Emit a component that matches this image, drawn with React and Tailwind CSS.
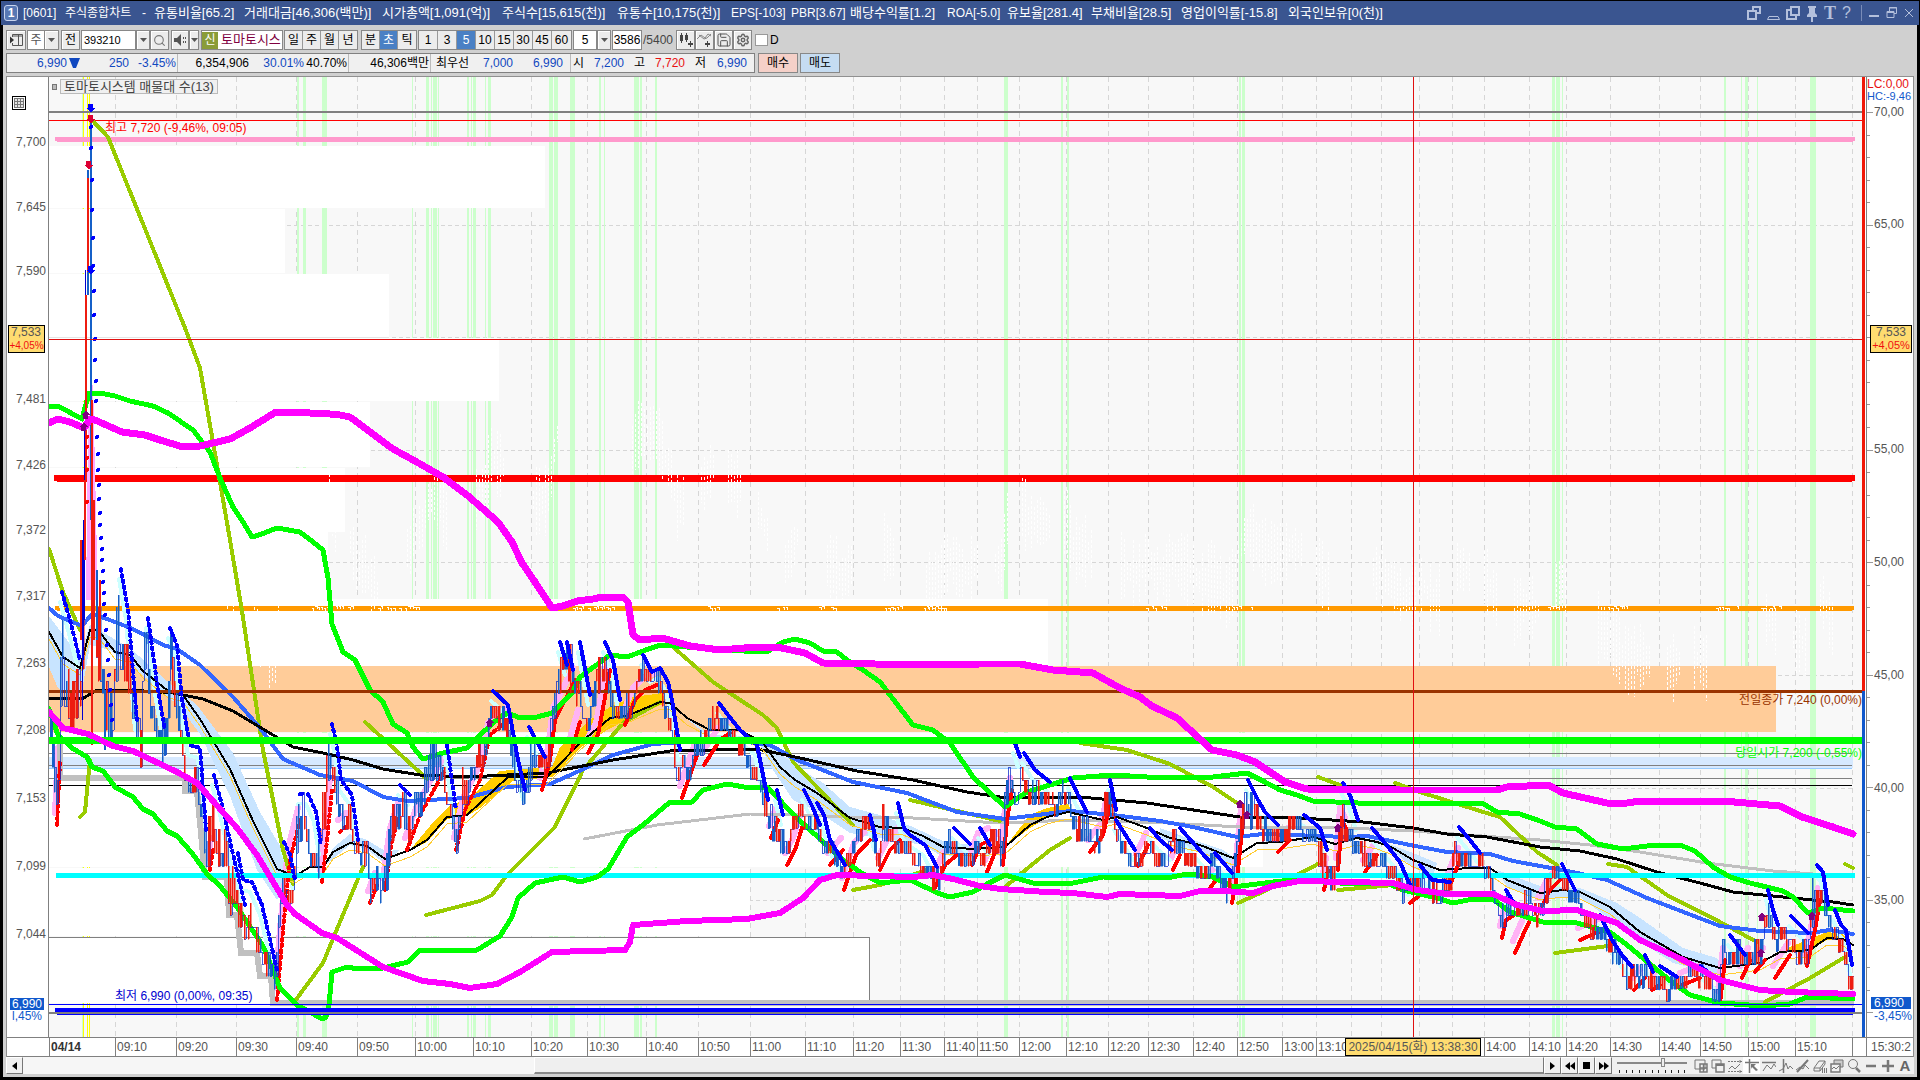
import React from "react";
import { Search, Settings, Save } from "lucide-react";

const X0 = 49;
const Y0 = 77;
const PLOT_W = 1817;
const PLOT_H = 960;
const topPct = (y) => ((y - Y0) / PLOT_H) * 100 + "%";
const leftPct = (x) => ((x - X0) / PLOT_W) * 100 + "%";

const titleItems = [
  ["[0601]", "w-[42px]"],
  ["주식종합차트", "w-[77px]"],
  ["-", "w-[12px]"],
  ["유통비율[65.2]", "w-[90px] text-[13px]"],
  ["거래대금[46,306(백만)]", "w-[138px] text-[13px]"],
  ["시가총액[1,091(억)]", "w-[120px] text-[13px]"],
  ["주식수[15,615(천)]", "w-[115px] text-[13px]"],
  ["유통수[10,175(천)]", "w-[114px] text-[13px]"],
  ["EPS[-103]", "w-[60px]"],
  ["PBR[3.67]", "w-[59px]"],
  ["배당수익률[1.2]", "w-[97px] text-[13px]"],
  ["ROA[-5.0]", "w-[60px]"],
  ["유보율[281.4]", "w-[84px] text-[13px]"],
  ["부채비율[28.5]", "w-[90px] text-[13px]"],
  ["영업이익률[-15.8]", "w-[107px] text-[13px]"],
  ["외국인보유[0(천)]", "w-[110px] text-[13px]"],
];

const priceLabels = [
  ["7,700", 142], ["7,645", 207], ["7,590", 271], ["7,481", 399], ["7,426", 465],
  ["7,372", 530], ["7,317", 596], ["7,263", 663], ["7,208", 730], ["7,153", 798],
  ["7,099", 866], ["7,044", 934],
];
const scaleLabels = [
  ["70,00", 112], ["65,00", 224], ["55,00", 449], ["50,00", 562], ["45,00", 675],
  ["40,00", 788], ["35,00", 900],
];

const timeTicks = [
  [49, "04/14"], [115, "09:10"], [176, "09:20"], [236, "09:30"], [296, "09:40"], [357, "09:50"],
  [415, "10:00"], [473, "10:10"], [531, "10:20"], [587, "10:30"], [646, "10:40"], [698, "10:50"],
  [750, "11:00"], [805, "11:10"], [853, "11:20"], [900, "11:30"], [944, "11:40"], [977, "11:50"],
  [1019, "12:00"], [1066, "12:10"], [1108, "12:20"], [1148, "12:30"], [1193, "12:40"], [1237, "12:50"],
  [1282, "13:00"], [1316, "13:10"], [1351, ""], [1381, ""], [1419, ""], [1452, ""], [1484, "14:00"],
  [1529, "14:10"], [1566, "14:20"], [1610, "14:30"], [1659, "14:40"], [1700, "14:50"], [1748, "15:00"],
  [1795, "15:10"], [1852, ""],
];
const timeColumns = timeTicks
  .map(([x], i) => `minmax(0,${(i + 1 < timeTicks.length ? timeTicks[i + 1][0] : 1866) - x}fr)`)
  .join(" ");

const greenBands = [
  [297, 2], [303, 3], [322, 5], [412, 1], [426, 3], [431, 1], [433, 4], [438, 1], [467, 2], [471, 1],
  [473, 3], [485, 1], [488, 3], [549, 4], [554, 4], [570, 5], [599, 2], [604, 1], [634, 5], [640, 2],
  [655, 2], [1004, 4], [1061, 2], [1067, 2], [1239, 2], [1242, 3], [1552, 3], [1556, 4], [1562, 1],
  [1724, 2], [1741, 1], [1745, 3], [1757, 1], [1810, 6],
];

const volumeBars = [
  [146, 62, 545], [209, 64, 285], [274, 63, 389], [338, 63, 499], [402, 65, 370], [468, 64, 345],
  [532, 67, 328], [599, 67, 1048], [666, 66, 1776], [733, 67, 1300], [800, 67, 1263], [868, 68, 750],
  [937, 66, 870],
];

const magentaUpper = "49,423 58,419 70,422 84,428 90,419 95,420 122,432 145,435 160,440 183,447 200,446 230,439 250,428 276,412 290,412 330,414 340,415 350,417 393,449 415,461 443,477 467,495 498,522 512,542 522,563 535,582 552,608 563,606 577,601 593,599 602,597 623,597 628,602 633,635 640,640 662,638 690,646 720,650 757,647 777,647 805,653 823,663 927,665 980,664 1020,664 1053,670 1093,673 1120,688 1140,697 1152,706 1177,718 1212,750 1237,755 1255,762 1285,782 1307,789 1400,790 1497,790 1507,787 1548,785 1563,793 1607,803 1627,803 1640,801 1723,801 1780,806 1802,817 1833,827 1853,834";
const greenUpper = "49,407 58,406 82,419 89,393 100,393 115,396 130,401 153,406 168,413 193,430 210,452 220,478 233,507 243,522 252,537 262,534 277,528 300,532 313,542 323,550 328,578 332,624 343,652 355,660 370,690 383,702 393,724 407,733 413,747 423,759 443,753 467,748 480,735 500,717 508,713 520,718 537,717 552,713 572,693 580,677 610,655 627,657 643,651 660,645 687,647 720,650 767,652 783,642 795,639 810,643 823,651 837,652 847,660 863,670 880,682 913,725 933,730 950,743 973,777 1005,807 1027,792 1050,785 1073,778 1113,775 1147,777 1213,777 1247,773 1263,781 1280,790 1297,795 1313,801 1380,804 1413,803 1482,803 1497,812 1520,814 1540,821 1555,827 1577,829 1597,844 1623,849 1647,846 1680,845 1695,851 1713,867 1730,877 1750,883 1783,891 1793,897 1808,913 1823,908 1853,911";
const greenLower = "49,709 58,735 72,748 87,757 92,767 103,771 115,787 133,797 143,809 153,814 167,831 177,836 192,853 207,874 220,886 237,907 263,946 280,988 297,1005 310,1012 322,1019 326,1017 329,1005 332,972 347,967 358,969 383,968 408,962 420,950 443,951 477,950 500,936 512,917 518,898 535,883 563,877 580,882 597,877 608,869 627,837 643,825 670,802 692,802 703,790 727,784 750,788 767,787 797,818 843,860 860,872 880,883 910,880 940,894 950,897 973,892 987,884 1005,875 1033,883 1073,883 1103,877 1167,878 1187,874 1213,877 1233,887 1290,880 1340,883 1387,883 1403,890 1437,898 1453,903 1473,899 1493,899 1510,912 1543,922 1577,923 1610,932 1627,945 1673,983 1690,995 1720,1003 1763,1006 1790,1004 1807,997 1853,999";
const magentaLower = "49,712 63,728 88,734 113,746 133,751 177,772 197,783 237,828 257,855 287,905 295,914 322,933 337,938 383,967 423,981 450,984 470,988 497,984 520,972 552,952 625,950 630,942 633,925 687,921 747,919 780,913 803,898 820,880 837,875 913,877 933,875 953,879 980,886 1000,889 1047,892 1073,893 1107,897 1120,894 1180,896 1200,891 1223,891 1253,893 1273,886 1300,881 1347,882 1393,883 1417,890 1447,894 1493,894 1517,905 1543,911 1577,910 1617,923 1640,940 1683,960 1720,980 1760,990 1793,992 1853,994";
const blueAverage = "49,608 58,616 82,626 92,614 107,619 133,629 163,645 177,649 200,665 233,697 260,728 283,759 320,775 353,781 383,797 407,801 467,798 507,787 550,784 577,772 613,755 653,744 687,742 747,742 770,745 797,760 853,782 907,793 957,812 1005,819 1070,811 1113,815 1160,821 1193,827 1237,837 1263,834 1347,837 1367,836 1410,845 1447,852 1490,854 1513,861 1573,872 1607,880 1647,898 1720,926 1760,931 1810,933 1830,930 1853,934";
const blackLong = "49,698 82,699 97,690 130,690 173,693 203,699 233,711 263,729 293,747 323,753 353,760 383,769 420,775 467,777 547,773 613,760 670,751 757,749 800,758 857,771 913,780 967,792 1000,797 1080,797 1147,803 1240,817 1300,818 1363,822 1413,828 1447,834 1487,837 1540,847 1580,851 1617,859 1657,872 1700,883 1733,892 1793,898 1833,902 1853,905";
const blackShort = "49,632 63,657 80,668 90,630 98,630 115,652 130,655 143,671 167,690 183,695 200,719 230,769 253,821 277,869 295,876 310,867 323,867 333,852 350,843 367,846 385,859 410,850 427,840 447,817 467,815 508,777 547,777 557,767 580,743 610,718 627,716 660,702 670,703 687,718 710,730 740,730 763,743 780,767 795,780 817,793 850,818 880,827 903,828 923,836 943,847 973,849 1005,847 1030,825 1047,817 1068,812 1103,820 1117,817 1147,828 1170,838 1200,845 1233,858 1257,843 1280,842 1313,837 1335,844 1357,838 1377,842 1393,848 1413,860 1440,870 1470,868 1490,868 1507,880 1540,893 1563,890 1580,892 1610,907 1640,932 1683,957 1720,968 1760,963 1780,952 1810,950 1827,938 1843,939 1853,945";
const grayAverage = "584,839 657,825 750,814 800,815 847,817 913,818 1000,823 1073,820 1167,823 1240,827 1347,828 1413,831 1467,835 1540,840 1590,845 1640,852 1707,863 1773,871 1853,877";

const oliveLines = [
  "92,120 108,137 185,328 200,368 217,465 230,540 242,611 263,750 283,850 293,884",
  "49,549 63,592 80,630", "80,817 85,812 90,760", "295,1001 323,963 337,929 363,867",
  "365,722 427,779", "426,915 480,901 492,895 507,875 555,827 583,770 623,723 660,702",
  "673,647 713,682 763,715 777,728 793,762 853,825", "853,890 880,885 927,870", "910,800 1000,821",
  "1005,887 1023,872 1050,850 1070,838", "1080,743 1127,750 1170,764 1213,787 1240,805",
  "1238,903 1267,890 1318,864", "1318,777 1340,785", "1338,890 1393,885",
  "1395,783 1423,793 1480,811 1500,817 1517,833 1537,852 1557,865", "1555,953 1608,946",
  "1608,864 1627,867 1667,895 1720,922 1757,942", "1765,1002 1810,978 1845,957", "1845,864 1853,868",
];

const blueClouds = [
  "49,616 67,640 80,655 90,625 130,648 167,681 197,705 233,753 260,812 280,846 293,857 292,880 277,900 257,870 230,796 200,734 180,707 133,667 110,650 90,645 80,702 58,688 49,667",
  "323,867 333,848 350,834 367,840 385,851 400,850 385,864 367,849 350,845",
  "667,702 710,735 750,736 767,743 797,767 823,783 850,807 880,815 913,827 947,843 980,845 977,857 940,855 923,845 880,838 850,833 820,813 793,800 773,770 760,745 710,738",
  "1160,828 1193,840 1223,850 1235,858 1233,868 1193,850 1160,838",
  "1373,838 1413,853 1437,863 1433,876 1413,868 1393,851",
  "1497,870 1540,886 1580,888 1617,903 1640,918 1683,948 1717,958 1725,968 1717,974 1673,963 1627,932 1580,897 1540,900 1507,887",
];
const goldClouds = [
  "410,850 430,826 450,805 467,800 500,771 552,767 560,747 590,720 610,707 633,697 663,693 665,703 627,720 607,730 580,748 553,777 513,781 480,808 467,816 447,819 427,842",
  "1005,847 1030,815 1047,808 1068,804 1072,812 1047,818 1030,828",
  "1780,951 1827,932 1843,934 1850,942 1843,940 1827,940 1810,950",
];

const blueTrails = [
  "62,592 70,620 80,660", "121,569 128,610 137,720", "148,618 158,690 165,730", "170,628 177,645 182,700 190,745 200,748 206,830",
  "214,775 222,805 232,850 245,905", "238,853 243,880 252,882 262,905 277,970", "284,842 290,855 295,880",
  "300,794 302,794", "308,794 316,812 321,845", "332,724 337,745 341,780 352,795 358,840", "400,785 410,795",
  "447,745 456,810", "493,691 508,705 518,760 525,790", "529,727 545,757", "560,642 567,665", "567,642 573,670",
  "580,642 590,695", "605,642 613,660 620,700", "643,655 652,672 660,668 668,682 672,700 680,750",
  "719,703 728,715 740,730 757,745 768,800", "777,790 783,815", "804,790 813,808 820,825",
  "817,803 824,815 830,840 845,865", "870,815 876,840", "898,803 904,828 910,835 925,845 937,867",
  "954,828 970,844", "980,828 990,845", "1015,743 1020,757", "1024,753 1035,770 1050,782",
  "1070,778 1078,795 1087,812", "1110,780 1116,810", "1116,820 1135,850", "1150,828 1160,840 1172,850",
  "1180,828 1195,845 1210,862", "1215,853 1232,873", "1248,780 1258,800 1265,812 1278,825",
  "1304,815 1320,828 1327,850", "1343,783 1350,795 1358,820", "1372,828 1385,843 1400,862 1410,885",
  "1420,865 1432,880 1450,882", "1459,827 1470,840 1480,853", "1506,890 1515,905",
  "1562,864 1570,880 1575,890", "1600,915 1612,940", "1612,940 1622,955 1632,967", "1645,955 1653,972",
  "1660,966 1677,977", "1700,966 1716,978", "1730,935 1745,955", "1768,890 1773,910 1778,925",
  "1791,916 1800,925 1808,933", "1817,865 1823,872 1828,905", "1835,910 1841,925 1846,930 1852,965",
];
const redTrails = [
  "57,825 60,760", "210,870 213,850", "277,1000 283,930 290,860 300,820", "322,882 326,850 332,790",
  "340,832 348,825", "370,903 377,885", "385,890 392,840 400,815", "407,850 420,815 445,770",
  "456,850 465,810 480,780 490,735 508,720", "542,790 550,760 555,720 575,680",
  "572,750 580,722", "588,753 598,735 610,670", "625,725 635,700 645,690 657,685", "682,798 690,775 697,755",
  "704,765 720,740 730,733", "771,838 778,820", "787,865 795,850 803,825", "830,865 843,850",
  "844,890 856,855 870,840", "880,870 890,850 900,840", "935,888 945,865 957,855", "972,865 980,845 990,840",
  "987,872 998,845", "1003,865 1007,820 1012,790", "1090,852 1103,835 1110,805", "1138,866 1148,845",
  "1173,870 1180,855", "1210,888 1216,880", "1232,903 1238,870 1243,820", "1278,852 1290,840",
  "1324,890 1328,870", "1338,870 1342,820 1347,830", "1365,872 1377,855", "1410,903 1420,895",
  "1450,885 1460,860", "1502,938 1506,920 1514,915", "1515,953 1523,935 1530,920", "1540,910 1550,890 1560,880",
  "1580,940 1603,930", "1634,990 1645,978", "1652,990 1660,985", "1682,985 1700,978",
  "1720,1003 1725,960", "1742,978 1750,960", "1755,972 1765,960", "1775,978 1790,955",
  "1807,966 1815,930 1820,900",
];

// steep early trails are drawn as separate points, later ones run together
const trailDash = (points) => (parseInt(points, 10) < 470 ? "2 4" : undefined);

const fallingDots = [
  [91, 127], [91, 148], [92, 180], [92, 210], [93, 238], [93, 266], [94, 291], [94, 315], [95, 339],
  [95, 360], [96, 381], [96, 401], [97, 437], [98, 454], [98, 470], [99, 485], [99, 499], [100, 513],
  [100, 525], [101, 538], [102, 549], [102, 560], [103, 571], [103, 582], [104, 593], [104, 604],
  [105, 615], [106, 630], [107, 645], [108, 660], [109, 675], [110, 690], [111, 705], [112, 720],
];

// x, highest and lowest screen position of the price around that moment
const envelope = [
  [49, 690, 745], [53, 745, 780], [55, 790, 827], [58, 760, 780], [60, 640, 720], [62, 600, 660],
  [64, 640, 720], [70, 680, 740], [75, 650, 740], [80, 670, 710], [83, 540, 640], [95, 590, 660],
  [100, 600, 700], [103, 680, 722], [108, 690, 760], [112, 690, 765], [114, 620, 720], [118, 569, 650],
  [122, 620, 690], [130, 660, 710], [134, 700, 735], [140, 720, 765], [143, 630, 700], [146, 618, 660],
  [150, 700, 730], [158, 720, 745], [162, 710, 765], [167, 690, 740], [170, 630, 690], [174, 680, 715],
  [178, 700, 740], [183, 740, 775], [188, 765, 790], [196, 765, 790], [200, 790, 820], [204, 830, 865],
  [207, 830, 875], [211, 780, 840], [216, 830, 870], [224, 830, 877], [230, 850, 910], [236, 870, 910],
  [240, 900, 940], [246, 910, 950], [251, 895, 930], [256, 920, 953], [262, 940, 965], [268, 955, 978],
  [272, 960, 990], [275, 970, 1000], [277, 900, 950], [280, 870, 920], [285, 870, 900], [292, 880, 910],
  [297, 795, 850], [304, 795, 840], [310, 840, 870], [318, 840, 875], [323, 760, 850], [328, 729, 780],
  [333, 760, 800], [340, 800, 830], [350, 795, 840], [357, 840, 870], [366, 832, 860], [370, 870, 900],
  [375, 860, 900], [380, 880, 903], [386, 850, 890], [390, 795, 850], [398, 800, 830], [404, 790, 830],
  [409, 820, 850], [414, 780, 815], [422, 785, 815], [428, 740, 790], [438, 745, 775], [443, 760, 790],
  [450, 800, 820], [456, 820, 850], [462, 770, 815], [468, 755, 800], [478, 745, 770], [484, 740, 760],
  [491, 690, 720], [498, 700, 730], [507, 705, 740], [510, 735, 765], [516, 765, 790], [525, 790, 803],
  [529, 730, 790], [536, 753, 775], [546, 750, 775], [551, 690, 770], [556, 655, 700], [561, 645, 690],
  [566, 643, 680], [570, 643, 690], [574, 665, 700], [580, 670, 710], [583, 715, 740], [590, 700, 720],
  [597, 660, 690], [600, 655, 690], [606, 660, 680], [612, 690, 720], [620, 700, 720], [630, 690, 715],
  [636, 670, 695], [640, 655, 680], [648, 665, 690], [654, 667, 680], [660, 675, 700], [668, 710, 730],
  [672, 700, 760], [676, 760, 788], [684, 750, 775], [690, 760, 780], [695, 735, 755], [705, 730, 750],
  [712, 705, 735], [716, 705, 720], [722, 717, 735], [732, 729, 742], [742, 742, 755], [750, 753, 770],
  [758, 765, 785], [766, 790, 820], [772, 810, 840], [778, 820, 850], [784, 835, 865], [793, 815, 840],
  [798, 792, 820], [806, 810, 830], [815, 815, 835], [824, 840, 855], [835, 840, 860], [842, 860, 882],
  [848, 845, 865], [856, 828, 845], [864, 815, 835], [872, 820, 840], [877, 860, 877], [882, 804, 840],
  [890, 825, 840], [900, 840, 852], [912, 842, 855], [920, 855, 865], [928, 866, 885], [938, 866, 890],
  [944, 830, 865], [952, 828, 850], [960, 853, 865], [968, 853, 865], [976, 830, 850], [984, 850, 870],
  [990, 830, 850], [997, 830, 865], [1003, 830, 865], [1005, 745, 830], [1010, 770, 800], [1016, 785, 803],
  [1021, 755, 780], [1028, 780, 803], [1040, 778, 803], [1050, 792, 803], [1057, 795, 815],
  [1062, 780, 800], [1068, 790, 805], [1072, 815, 840], [1085, 818, 840], [1098, 828, 850],
  [1105, 790, 820], [1108, 780, 800], [1113, 810, 830], [1120, 840, 855], [1130, 850, 866],
  [1140, 850, 866], [1148, 830, 850], [1155, 850, 866], [1165, 853, 875], [1172, 830, 850],
  [1180, 842, 853], [1192, 853, 866], [1202, 868, 878], [1212, 853, 870], [1218, 865, 885],
  [1226, 880, 900], [1232, 860, 880], [1238, 815, 850], [1245, 790, 820], [1249, 780, 830],
  [1255, 805, 825], [1265, 820, 840], [1280, 827, 840], [1292, 815, 835], [1302, 820, 835],
  [1312, 828, 840], [1320, 840, 870], [1328, 855, 890], [1334, 865, 890], [1340, 800, 850],
  [1346, 820, 840], [1352, 825, 850], [1362, 840, 866], [1372, 850, 866], [1384, 853, 866],
  [1394, 866, 885], [1402, 880, 903], [1412, 878, 890], [1422, 865, 880], [1430, 880, 903],
  [1440, 885, 903], [1444, 865, 890], [1450, 868, 885], [1454, 830, 860], [1458, 838, 866],
  [1466, 845, 866], [1475, 853, 868], [1484, 853, 875], [1490, 868, 885], [1496, 880, 905],
  [1500, 900, 938], [1506, 890, 915], [1512, 905, 915], [1520, 895, 915], [1528, 890, 905],
  [1536, 900, 925], [1543, 880, 915], [1550, 866, 885], [1560, 866, 880], [1565, 880, 890],
  [1576, 885, 900], [1583, 900, 938], [1594, 915, 940], [1602, 928, 940], [1612, 940, 953],
  [1622, 955, 978], [1630, 965, 990], [1640, 965, 975], [1650, 965, 985], [1660, 978, 990],
  [1672, 978, 990], [1684, 966, 978], [1700, 966, 978], [1706, 975, 990], [1716, 985, 1003],
  [1720, 960, 1000], [1723, 929, 955], [1730, 945, 970], [1740, 942, 960], [1750, 942, 965],
  [1760, 940, 965], [1764, 905, 935], [1768, 900, 935], [1775, 925, 945], [1785, 928, 942],
  [1795, 942, 953], [1807, 945, 965], [1812, 870, 930], [1820, 880, 905], [1825, 890, 915],
  [1832, 920, 945], [1842, 930, 950], [1848, 960, 990], [1852, 970, 992],
];

const noise = (n) => {
  const v = Math.sin(n * 127.1 + 11.7) * 43758.5453;
  return v - Math.floor(v);
};
const snap = (y) => 595 + Math.round((y - 595) / 12.3) * 12.3;
const priceAt = (x) => {
  let i = 0;
  while (i < envelope.length - 2 && envelope[i + 1][0] < x) i++;
  const [xa, ha, la] = envelope[i];
  const [xb, hb, lb] = envelope[i + 1];
  const t = Math.max(0, Math.min(1, (x - xa) / (xb - xa)));
  return [ha + (hb - ha) * t, la + (lb - la) * t];
};

const candles = { red: "", blue: "", link: "" };
let previous = 720;
for (let x = 50; x <= 1853; x += 2) {
  if (x > 82 && x < 95) continue;
  const [hi, lo] = priceAt(x);
  const a = noise(x);
  const b = noise(x + 0.5);
  const top = Math.round(snap(hi + (lo - hi) * a * 0.5));
  let bottom = Math.round(snap(lo - (lo - hi) * b * 0.35));
  if (bottom - top < 10) bottom = top + 12;
  const w = noise(x + 7) > 0.7 ? 2 : 1;
  const side = noise(Math.floor(x / 4) + 31) > 0.48 ? "red" : "blue";
  if (noise(x + 3) > 0.12) candles[side] += `M${x} ${top}h${w}v${bottom - top}h${-w}z`;
  const next = noise(x + 5) > 0.5 ? top : bottom;
  candles.link += `M${x} ${previous}V${next}h2`;
  previous = next;
}

let ghost = "";
for (let x = 200; x < 1852; x += 3) {
  if (noise(Math.floor(x / 14) + 3) < 0.42) continue;
  const [hi, lo] = priceAt(x);
  const mid = 415 + ((hi + lo) / 2 - 650) * 0.76;
  const len = 14 + noise(x + 9) * 60;
  ghost += `M${x} ${Math.round(mid - len / 2)}v${Math.round(len)}`;
}
let lineNicks = "";
for (let x = 300; x < 1850; x += 3) {
  if (noise(Math.floor(x / 22) + 77) > 0.72 && noise(x + 2) > 0.35) {
    lineNicks += `M${x} ${606 + Math.floor(noise(x) * 3)}h${noise(x + 1) > 0.5 ? 2 : 1}v3`;
  }
}

function Curve({ points, color, width, dash }) {
  return (
    <polyline points={points} fill="none" stroke={color} strokeWidth={width} strokeDasharray={dash}
      strokeLinecap="round" strokeLinejoin="round" />
  );
}
function Level({ y, color, width = 1, from = X0, to = 1862 }) {
  return <rect x={from} y={y} width={to - from} height={width} fill={color} />;
}
function Arrow({ x, y, color }) {
  return <path d={`M${x - 2} ${y - 4}h5v4h2l-4 4h-1l-4 -4h2z`} fill={color} />;
}
function Diamond({ x, y }) {
  return <path d={`M${x} ${y - 4}l4 4h-2v4h-5v-4h-2z`} fill="#800080" />;
}

function Plot() {
  return (
    <svg className="block h-full w-full" viewBox={`${X0} ${Y0} ${PLOT_W} ${PLOT_H}`} preserveAspectRatio="none" shapeRendering="crispEdges" aria-hidden="true">
      <rect x={X0} y={Y0} width={PLOT_W} height={PLOT_H} fill="#f8f8f8" />
      {timeTicks.slice(1).map(([x]) => (
        <path key={x} d={`M${x + 0.5} 77V1037`} stroke="#d6d6d6" strokeDasharray="5 4" />
      ))}
      {[225, 337, 450, 562, 675, 788, 900].map((y) => (
        <path key={y} d={`M49 ${y + 0.5}H1854`} stroke="#d6d6d6" strokeDasharray="4 3" />
      ))}
      {greenBands.map(([x, w]) => <rect key={x} x={x} y={Y0} width={w} height={PLOT_H} fill="#ccffcc" />)}
      <rect x="82" y={Y0} width="1" height={PLOT_H} fill="#ccffcc" />
      <path d="M83.5 77V1037M87.5 77V1037M89.5 77V1037" stroke="#ffff00" />
      {volumeBars.map(([y, h, to]) => (
        <rect key={y} x={X0} y={y} width={to - X0} height={h} fill={y === 666 ? "#ffcc99" : "#ffffff"} />
      ))}
      <path d="M49 937.5H869.5V1003" fill="none" stroke="#808080" />
      <Level y={337} color="#e4e4e4" to={389} />

      <Level y={757} color="#d6e9ff" width={11} to={1853} />
      <Level y={753} color="#808080" to={1852} />
      <Level y={765} color="#808080" to={1852} />
      <Level y={768} color="#99ccff" to={1852} />
      <Level y={778} color="#808080" to={1852} />
      <Level y={785} color="#000000" to={1852} />
      <Level y={111} color="#808080" width={2} />
      <Level y={120} color="#ff0000" />
      <Curve points="57,139 1853,139" color="#ff99cc" width={5} />
      <Curve points="57,478 1852,478" color="#ff0000" width={7} />
      <Curve points="57,608 1852,608" color="#ff9900" width={5} />
      <path d={ghost} fill="none" stroke="#ffffff" strokeDasharray="3 2" />
      <path d={lineNicks} fill="none" stroke="#ffffff" />

      {blueClouds.map((p) => <polygon key={p} points={p} fill="#c8e4ff" />)}
      {goldClouds.map((p) => <polygon key={p} points={p} fill="#ffcc00" />)}
      <g transform="translate(-2 -12)">
        {redTrails.map((p) => <Curve key={p} points={p} color="#ffb3f5" width={6} />)}
      </g>
      <g transform="translate(-2 10)">
        {blueTrails.map((p) => <Curve key={p} points={p} color="#ccffff" width={4} />)}
      </g>
      <path d="M86 600L88 430L93 380L98 600Z" fill="#ffaaff" />
      <path d="M60 740V778H185V791H197L201 833L205 877H227L229 915H237L241 953H257L260 976H271L273 1003H1854" fill="none" stroke="#c0c0c0" strokeWidth="6" />
      <Curve points={grayAverage} color="#c0c0c0" width={3} />
      {oliveLines.map((p) => <Curve key={p} points={p} color="#99cc00" width={4} />)}
      <Curve points={blueAverage} color="#3366ff" width={4} />
      <Curve points={blackLong} color="#000000" width={3} />
      <g transform="translate(0 7)">
        <Curve points={blackShort} color="#ffcc33" width={1} />
      </g>
      <Curve points={blackShort} color="#000000" width={2} />
      {redTrails.map((p) => <Curve key={p} points={p} color="#ff0000" width={4} dash={trailDash(p)} />)}
      <Level y={873} color="#00ffff" width={5} from={56} to={1855} />
      <Curve points={greenUpper} color="#00ff00" width={5} />
      <Curve points={greenLower} color="#00ff00" width={5} />
      <Level y={690} color="#993300" width={3} />
      <path d={candles.link} fill="none" stroke="#0a28c8" strokeOpacity="0.75" />
      <path d={candles.blue} fill="#1560c8" stroke="#1560c8" strokeWidth="0.5" />
      <path d={candles.red} fill="#ee1c10" stroke="#ee1c10" strokeWidth="0.5" />
      {blueTrails.map((p) => <Curve key={p} points={p} color="#0000ff" width={4} dash={trailDash(p)} />)}

      <path d="M82 540V720M84 430V620M85 270V440M83 520V660" stroke="#0000d0" />
      <path d="M91 118V520M94 510V620M97 570V640M105 690V750M88 170V295" stroke="#1560c8" strokeWidth="2" />
      <path d="M86 295V480M85 480V560M88 178V272M92 400V745M94 500V640M100 580V680M81 540V640" stroke="#ee1c10" strokeWidth="2" />
      {fallingDots.map(([x, y]) => <circle key={`${x}-${y}`} cx={x} cy={y} r="2" fill="#0000ff" />)}
      {[437, 447, 458, 470, 502].map((y) => <circle key={y} cx="87" cy={y} r="2" fill="#ff0000" />)}

      <Level y={737} color="#00ff00" width={7} />
      <Curve points={magentaLower} color="#ff00ff" width={6} />
      <Curve points={magentaUpper} color="#ff00ff" width={7} />
      <Level y={1004} color="#0000ff" />
      <Curve points="57,1010 1853,1010" color="#0000ff" width={5} />
      <Level y={1012} color="#808080" width={2} />
      <Level y={1014} color="#0000ff" from={57} to={1853} />

      <Arrow x={90} y={108} color="#0000ff" />
      <Arrow x={90} y={119} color="#dd0033" />
      <Arrow x={88} y={165} color="#dd0033" />
      <Arrow x={90} y={270} color="#0000ff" />
      {[[84, 427], [86, 415], [490, 723], [1240, 804], [1247, 815], [1338, 828], [1762, 917], [1812, 916], [1761, 953]].map(([x, y]) => (
        <Diamond key={`${x}-${y}`} x={x} y={y} />
      ))}

      <Level y={339} color="#e01010" to={1866} />
      <rect x="1413" y={Y0} width="1" height={PLOT_H} fill="#e01010" />
      <rect x="1862" y={Y0} width="3" height={614} fill="#f01808" />
      <rect x="1862" y={691} width="3" height={346} fill="#1058cc" />
      <rect x="1865" y={Y0} width="1" height={PLOT_H} fill="#ffffff" />
    </svg>
  );
}

const raised = "flex items-center justify-center border border-[#888888] bg-[#ececec] shadow-[inset_1px_1px_0_#ffffff]";

function Caret() {
  return (
    <svg width="7" height="4" viewBox="0 0 7 4" aria-hidden="true"><path d="M0 0h7L3.500 4z" fill="#555" /></svg>
  );
}
function ArrowButton({ label, className }) {
  return <button aria-label={label} className={`${raised} h-full ${className}`}><Caret /></button>;
}

function Group({ items, active, className, cell }) {
  return (
    <div className={`flex h-full border border-[#888888] bg-[#ececec] ${className}`}>
      {items.map((t) => (
        <button key={t} className={`${cell} border-r border-[#999999] last:border-r-0 ${t === active ? "bg-[#4a80c4] text-white" : ""}`}>
          {t}
        </button>
      ))}
    </div>
  );
}

function TitleBar() {
  return (
    <header className="mx-px mt-px flex h-6 shrink-0 items-center bg-[#3a5590] pl-[3px] pr-[5px] text-[12px] text-white">
      <span className="mr-[5px] flex h-4 w-[14px] items-center justify-center rounded-[3px] border border-[#c8d4ee] bg-[#5878b4] text-[12px] font-bold leading-3">1</span>
      <h1 className="flex items-center whitespace-nowrap leading-5">
        {titleItems.map(([t, w]) => <span key={t} className={`${w} shrink-0`}>{t}</span>)}
      </h1>
      <div className="ml-auto flex shrink-0 items-center gap-[6px] text-[#b4c0dc]">
        <button aria-label="새 창"><svg width="14" height="16" viewBox="0 0 14 16" fill="none" stroke="currentColor" strokeWidth="2" shapeRendering="crispEdges"><path d="M6 5V2h7v6H9M1 6h8v8H1z" /></svg></button>
        <button aria-label="내리기"><svg width="13" height="16" viewBox="0 0 13 16" fill="none" stroke="currentColor"><path d="M2 11.500h9l1.500 3h-12z" /></svg></button>
        <button aria-label="복사"><svg width="14" height="16" viewBox="0 0 14 16" fill="none" stroke="currentColor" strokeWidth="2" shapeRendering="crispEdges"><path d="M5 2h8v8H5zM4 5H1v9h9v-3" /></svg></button>
        <button aria-label="고정"><svg width="12" height="18" viewBox="0 0 12 18" fill="currentColor"><path d="M2 2h8v2H9v5l2 2v2H1v-2l2-2V4H2zM5 12h2v6H5z" /></svg></button>
        <button aria-label="글꼴" className="font-['Liberation_Serif'] text-[18px] font-bold leading-4">T</button>
        <button aria-label="도움말" className="text-[16px] leading-4">?</button>
        <span className="ml-1 h-4 w-px bg-[#7a8cb8]" />
        <button aria-label="최소화"><svg width="12" height="14" viewBox="0 0 12 14"><path d="M1 9h10v2H1z" fill="currentColor" /></svg></button>
        <button aria-label="이전 크기"><svg width="12" height="14" viewBox="0 0 12 14" fill="none" stroke="currentColor"><path d="M3.500 5V1.500h7v6H8M1 5.500h7v6H1zM3 2h8M1 6.500h7" /></svg></button>
        <button aria-label="닫기"><svg width="10" height="14" viewBox="0 0 10 14" stroke="currentColor"><path d="M1 3l8 8M9 3l-8 8" /></svg></button>
      </div>
    </header>
  );
}

function Toolbar() {
  return (
    <div className="flex h-5 shrink-0 items-center whitespace-nowrap text-[12px] text-black">
      <button aria-label="패널 열기" className={`${raised} h-full w-[20px]`}>
        <svg width="14" height="14" viewBox="0 0 14 14" fill="none" stroke="#555"><path d="M3.500 4V1.500h10v11h-10V10M9.500 1.500v11M4 3h9" /><path d="M1 3.500v7L5 7z" fill="#333" stroke="none" /></svg>
      </button>
      <div className="ml-px flex h-full w-8">
        <button className="w-[17px] border border-r-0 border-[#888888] bg-white text-[#555]">주</button>
        <ArrowButton label="주식 구분" className="w-[15px]" />
      </div>
      <button className={`${raised} ml-[2px] h-full w-[19px]`}>전</button>
      <input aria-label="종목코드" defaultValue="393210" className="ml-px h-full w-[55px] border border-[#888888] bg-white px-[2px] text-[11px] outline-none" />
      <ArrowButton label="종목 목록" className="w-[14px]" />
      <button aria-label="종목 검색" className={`${raised} h-full w-[19px]`}><Search size={13} color="#777" /></button>
      <button aria-label="음성" className={`${raised} ml-[2px] h-full w-[18px]`}>
        <svg width="13" height="12" viewBox="0 0 13 12" fill="#555"><path d="M0 4h3l4-4v12L3 8H0zM9 3h1v2H9zM11 3h1v2h-1zM9 7h1v2H9zM11 7h1v2h-1z" /></svg>
      </button>
      <ArrowButton label="음성 설정" className="w-[10px]" />
      <div className="ml-[2px] flex h-full w-[82px] items-center overflow-hidden border border-[#888888] bg-white text-[#800040]">
        <span className="flex h-[17px] w-4 shrink-0 items-center justify-center bg-[#8a9c38] text-white">신</span>
        <span className="ml-[3px] text-[13px]">토마토시스</span>
      </div>
      <Group items={["일", "주", "월", "년"]} cell="w-[18px]" className="ml-px" />
      <Group items={["분", "초", "틱"]} active="초" cell="w-[18px]" className="ml-[3px]" />
      <Group items={["1", "3", "5", "10", "15", "30", "45", "60"]} active="5" cell="w-[19px] text-[12px]" className="ml-px" />
      <input aria-label="주기" defaultValue="5" className="ml-px h-full w-6 border border-[#888888] bg-white text-center text-[12px] outline-none" />
      <ArrowButton label="주기 선택" className="w-[14px]" />
      <input aria-label="조회 개수" defaultValue="3586" className="ml-px h-full w-[30px] border border-[#888888] bg-white text-center text-[12px] outline-none" />
      <span className="ml-px text-[#444]">/5400</span>
      <div className="ml-[3px] flex h-full">
        <button aria-label="봉 추가" className={`${raised} w-[19px]`}>
          <svg width="16" height="16" viewBox="0 0 16 16" fill="#444"><path d="M2 3h3v6H2zM3 1h1v10H3zM7 3h3v5H7zM8 1h1v9H8zM12 9h1v2h2v2h-2v2h-1v-2h-2v-2h2z" /></svg>
        </button>
        <button aria-label="지표 추가" className={`${raised} w-[19px]`}>
          <svg width="16" height="16" viewBox="0 0 16 16" fill="none" stroke="#888"><path d="M0 7l4-4 4 3 3-4 3 2M2 3l5 4 3-1 4-4" /><path d="M10 9h1v2h2v2h-2v2h-1v-2H8v-2h2z" fill="#444" stroke="none" /></svg>
        </button>
        <button aria-label="저장" className={`${raised} w-[19px]`}><Save size={16} color="#555" strokeWidth={1.500} /></button>
        <button aria-label="설정" className={`${raised} w-[19px]`}><Settings size={14} color="#666" strokeWidth={2.500} /></button>
      </div>
      <label className="ml-[3px] flex items-center gap-[2px]">
        <input type="checkbox" className="h-3 w-[13px] appearance-none border border-[#999] bg-white" />D
      </label>
    </div>
  );
}

function Quote({ w, children, className = "" }) {
  return <span className={`${w} shrink-0 text-right ${className}`}>{children}</span>;
}

function QuoteBar() {
  const blue = "text-[#1048c0]";
  return (
    <div className="mt-[3px] flex h-5 shrink-0 text-[12px] leading-[18px] whitespace-nowrap">
      <div className="flex w-[749px] border border-[#808080] bg-[#f0f0f0]">
        <Quote w="w-[73px]" className={blue}>
          <span className="flex items-center justify-end gap-[2px]">
            6,990
            <svg width="11" height="10" viewBox="0 0 11 10" fill="currentColor" aria-label="하락"><path d="M0 0h11L7 10H4z" /></svg>
          </span>
        </Quote>
        <Quote w="w-[49px]" className={blue}>250</Quote>
        <Quote w="w-[49px]" className={`${blue} border-r border-[#bbb] pr-px`}>-3.45%</Quote>
        <Quote w="w-[71px]">6,354,906</Quote>
        <Quote w="w-[55px]" className={blue}>30.01%</Quote>
        <Quote w="w-[45px]" className="border-r border-[#bbb] pr-px">40.70%</Quote>
        <Quote w="w-[82px]" className="border-r border-[#bbb] pr-px">46,306백만</Quote>
        <Quote w="w-[38px]">최우선</Quote>
        <Quote w="w-[44px]" className={blue}>7,000</Quote>
        <Quote w="w-[58px]" className={`${blue} border-r border-[#bbb] pr-[7px]`}>6,990</Quote>
        <Quote w="w-[13px]">시</Quote>
        <Quote w="w-[40px]" className={blue}>7,200</Quote>
        <Quote w="w-[21px]">고</Quote>
        <Quote w="w-[40px]" className="text-[#e81010]">7,720</Quote>
        <Quote w="w-[21px]">저</Quote>
        <Quote w="w-[41px]" className={blue}>6,990</Quote>
      </div>
      <button className="ml-[3px] w-10 border border-[#888] bg-[#f5d0c8]">매수</button>
      <button className="ml-[2px] w-10 border border-[#888] bg-[#c5dcf2]">매도</button>
    </div>
  );
}

function PriceAxis() {
  return (
    <div className="relative overflow-hidden border-r border-[#808080] bg-white text-[12px] text-[#555]">
      <button aria-label="표 보기" className="absolute left-[5px] top-[19px] flex h-[14px] w-[14px] items-center justify-center border border-black bg-white">
        <svg width="10" height="10" viewBox="0 0 10 10" fill="#e4e4e4" stroke="#777" shapeRendering="crispEdges"><path d="M.5.5h9v9h-9zM.5 3.500h9M.5 6.500h9M3.500.5v9M6.500.5v9" /></svg>
      </button>
      {priceLabels.map(([t, y]) => (
        <span key={t} className="absolute right-[2px] -translate-y-1/2 leading-3" style={{ top: topPct(y) }}>{t}</span>
      ))}
      <div className="absolute left-px flex w-[37px] -translate-y-1/2 flex-col border border-black bg-[#ffdc70] text-right leading-[13px]" style={{ top: topPct(339) }}>
        <span className="pr-[3px]">7,533</span>
        <span className="whitespace-nowrap text-center text-[10px] text-[#f01010]">+4,05%</span>
      </div>
      <div className="absolute left-[3px] w-[34px] -translate-y-1/2 bg-[#1058cc] text-center leading-3 text-white" style={{ top: topPct(1004) }}>6,990</div>
      <div className="absolute left-[5px] -translate-y-1/2 leading-3 text-[#1058cc]" style={{ top: topPct(1016) }}>l,45%</div>
    </div>
  );
}

function ScaleAxis() {
  const ticks = Array.from({ length: 41 }, (_, i) => 112 + i * 22.5);
  return (
    <div className="relative overflow-hidden border-l border-[#808080] bg-white text-[12px] text-[#555]">
      {ticks.map((y, i) => (
        <span key={y} className={`absolute left-0 h-px bg-[#999] ${i % 5 === 0 ? "w-[6px]" : "w-[3px]"}`} style={{ top: topPct(y) }} />
      ))}
      <div className="flex flex-col whitespace-nowrap bg-white pt-px leading-3">
        <span className="text-[#e81010]">LC:0,00</span>
        <span className="text-[11px] text-[#1058cc]">HC:-9,46</span>
      </div>
      {scaleLabels.map(([t, y]) => (
        <span key={t} className="absolute left-[7px] -translate-y-1/2 leading-3" style={{ top: topPct(y) }}>{t}</span>
      ))}
      <div className="absolute left-[3px] flex w-[42px] -translate-y-1/2 flex-col border border-black bg-[#ffdc70] text-center leading-[13px]" style={{ top: topPct(339) }}>
        <span>7,533</span>
        <span className="text-[11px] text-[#f01010]">+4,05%</span>
      </div>
      <div className="absolute left-[4px] w-10 -translate-y-1/2 bg-[#1058cc] pl-[3px] leading-3 text-white" style={{ top: topPct(1003) }}>6,990</div>
      <div className="absolute left-[7px] -translate-y-1/2 leading-3 text-[#1058cc]" style={{ top: topPct(1016) }}>-3,45%</div>
    </div>
  );
}

function ChartNote({ x, y, color, end, children }) {
  return (
    <span className={`absolute -translate-y-1/2 whitespace-nowrap text-[12px] leading-3 ${color} ${end ? "right-1" : ""}`}
      style={end ? { top: topPct(y) } : { top: topPct(y), left: leftPct(x) }}>
      {children}
    </span>
  );
}

function TimeAxis() {
  return (
    <div className="flex h-5 shrink-0 border-y border-[#808080] bg-white text-[12px] leading-[18px] text-[#555]">
      <div className="w-[42px] shrink-0" />
      <div className="relative grid min-w-0 grow" style={{ gridTemplateColumns: timeColumns }}>
        {timeTicks.map(([x, t], i) => (
          <span key={x} className={`overflow-hidden border-l border-[#808080] pl-px ${i === 0 ? "font-bold text-[#333]" : ""}`}>{t}</span>
        ))}
        <div className="absolute inset-y-0 w-[136px] overflow-hidden whitespace-nowrap border border-black bg-[#ffdc70] text-center text-[12px] leading-4" style={{ left: leftPct(1345) }}>
          2025/04/15(화) 13:38:30
        </div>
      </div>
      <div className="w-[47px] shrink-0 border-l border-[#808080] pl-1 whitespace-nowrap">15:30:2</div>
    </div>
  );
}

const toolIcons = [
  ["추가", <><path d="M1 1h10v9H1z" /><path d="M6 5h7v8H6zM9.500 5v8M6 9h7" strokeWidth="1.500" /></>],
  ["겹치기", <><path d="M1 1h9v8H1z" /><path d="M5 5h8v8H5z" fill="#f0f0f0" strokeWidth="1.500" /><path d="M5 6h8" strokeWidth="2" /></>],
  ["구간", <><path d="M0 2.500h14M0 12.500h14" strokeDasharray="2 1" /><path d="M1 10l3-3 3 3 5-5M12 1v3M12 11v3" /></>],
  ["십자선", <><path d="M0 3.500h14M4.500 0v14" strokeWidth="1.500" /><path d="M6 5h5l-2 2 4 4-2 1-4-4-1 2z" fill="#777" stroke="none" /></>],
  ["수평선", <><path d="M0 3.500h14" strokeWidth="1.500" /><path d="M1 12l4-6 4 4 3-5 2 3" /></>],
  ["수직선", <><path d="M4.500 0v14" strokeWidth="1.500" /><path d="M0 12l4-2 3-6 2 6 2-3 3 3" /></>],
  ["추세선", <><path d="M1 13L12 1" strokeWidth="2" /><path d="M0 11l4-3 3 2 2-4 4 4" /></>],
  ["전체 지우기", <><path d="M1 9l5-7h6l-5 7zM1 9v3h6V9M7 12l5-7V2" /><path d="M9.500 9v5M11.500 9v5M13.500 9v5" /></>],
  ["차트 겹치기", <><path d="M4 1h9v7H4z" fill="#ccc" /><path d="M1 5h9v8H1z" fill="#f0f0f0" strokeWidth="1.500" /><path d="M2 10l2-2 2 2 3-3" /></>],
  ["돋보기", <><circle cx="6" cy="5" r="4.500" /><path d="M9 9l4 4" strokeWidth="2.500" /></>],
  ["축소", <path d="M2 7h10" strokeWidth="2.500" />],
  ["확대", <path d="M1 7h12M7 1v12" strokeWidth="2.500" />],
];

function ScrollRow() {
  const small = "flex h-full w-[17px] shrink-0 items-center justify-center border border-white border-r-[#777] border-b-[#777] bg-[#f0f0f0]";
  return (
    <div className="flex h-[17px] shrink-0 bg-[#f0f0f0]">
      <button aria-label="왼쪽으로" className={small}><svg width="5" height="8" viewBox="0 0 5 8"><path d="M5 0v8L0 4z" /></svg></button>
      <div className="flex min-w-0 grow bg-[#f6f6f6]">
        <div className="w-1/3" />
        <button aria-label="스크롤 막대" className="ml-1 grow border border-white border-r-[#777] border-b-2 border-b-[#888] bg-[#efefef]" />
      </div>
      <button aria-label="재생" className={small}><svg width="5" height="8" viewBox="0 0 5 8"><path d="M0 0v8l5-4z" /></svg></button>
      <button aria-label="뒤로" className={small}><svg width="10" height="8" viewBox="0 0 10 8"><path d="M5 0v8L0 4zM10 0v8L5 4z" /></svg></button>
      <button aria-label="정지" className={small}><svg width="7" height="7" viewBox="0 0 7 7"><path d="M0 0h7v7H0z" /></svg></button>
      <button aria-label="앞으로" className={small}><svg width="10" height="8" viewBox="0 0 10 8"><path d="M0 0v8l5-4zM5 0v8l5-4z" /></svg></button>
      <label className="ml-[5px] flex w-[70px] shrink-0 flex-col">
        <input type="range" aria-label="재생 속도" min="0" max="100" defaultValue="67"
          className="mt-px h-[9px] w-full appearance-none bg-[linear-gradient(#888,#888)] bg-[length:100%_2px] bg-center bg-no-repeat [&::-webkit-slider-thumb]:h-[9px] [&::-webkit-slider-thumb]:w-[4px] [&::-webkit-slider-thumb]:appearance-none [&::-webkit-slider-thumb]:border [&::-webkit-slider-thumb]:border-[#888] [&::-webkit-slider-thumb]:bg-[#eee]" />
        <svg className="mt-[3px]" width="70" height="3" viewBox="0 0 70 3" stroke="#222" aria-hidden="true"><path d="M2.500 0v3M9.500 0v3M15.500 0v3M22.500 0v3M28.500 0v3M35.500 0v3M41.500 0v3M48.500 0v3M54.500 0v3M61.500 0v3M67.500 0v3" /></svg>
      </label>
      <div className="ml-[5px] flex shrink-0 items-center">
        {toolIcons.map(([t, icon]) => (
          <button key={t} aria-label={t} className={`flex h-full w-[17px] items-center justify-center ${t === "십자선" ? "bg-white" : ""}`}>
            <svg width="14" height="14" viewBox="0 0 14 14" fill="none" stroke="#777">{icon}</svg>
          </button>
        ))}
        <button aria-label="자동" className="w-[18px] text-[15px] font-bold leading-4 text-[#666]">A</button>
      </div>
    </div>
  );
}

export default function App() {
  return (
    <main className="flex h-screen flex-col overflow-hidden bg-black font-['Liberation_Sans','Noto_Sans_CJK_KR',sans-serif]">
      <TitleBar />
      <div className="ml-[3px] mr-[3px] mb-[3px] flex min-h-0 grow flex-col bg-[#d0d0d0] px-[3px] pb-[3px] pt-[5px]">
        <Toolbar />
        <QuoteBar />
        <section className="mt-[3px] flex min-h-0 grow flex-col border border-b-0 border-[#909090] bg-white">
          <div className="grid min-h-0 grow grid-cols-[42px_minmax(0,1fr)_47px]">
            <PriceAxis />
            <div className="relative min-h-0 overflow-hidden">
              <Plot />
              <div className="absolute left-[3px] top-[2px] flex items-center gap-[3px] text-[13px] text-[#444]">
                <span className="h-[6px] w-[5px] border border-[#777] bg-[#bbb]" />
                <span className="border border-[#bbb] bg-[#f0f0f0] px-[3px] leading-[13px]">토마토시스템 매물대 수(13)</span>
              </div>
              <ChartNote x={105} y={128} color="text-[#ff0000]">최고 7,720 (-9,46%, 09:05)</ChartNote>
              <ChartNote x={115} y={996} color="text-[#0000d0]">최저 6,990 (0,00%, 09:35)</ChartNote>
              <ChartNote end y={700} color="text-[#993300]">전일종가 7,240 (0,00%)</ChartNote>
              <ChartNote end y={753} color="text-[#00ff00]">당일시가 7,200 (-0,55%)</ChartNote>
            </div>
            <ScaleAxis />
          </div>
          <TimeAxis />
        </section>
        <ScrollRow />
      </div>
    </main>
  );
}
